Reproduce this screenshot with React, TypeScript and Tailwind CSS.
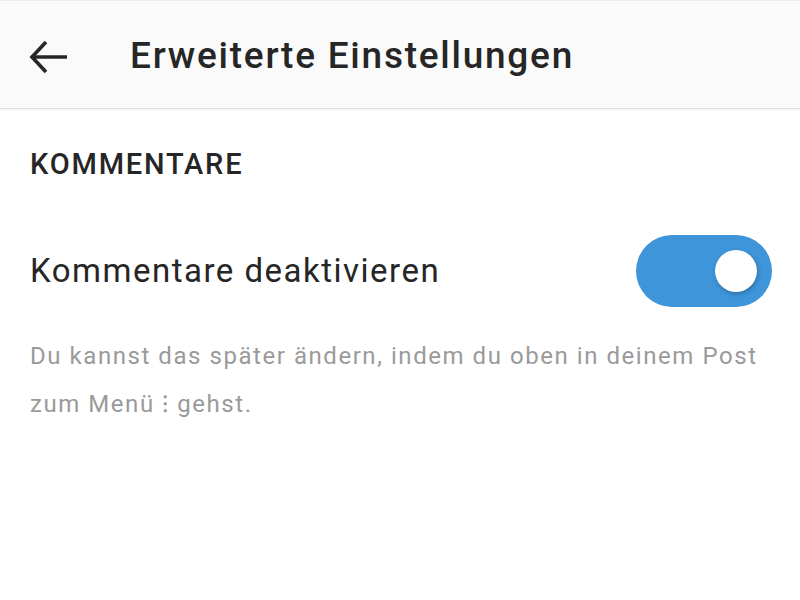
import { useState } from "react";

export default function App() {
  const [disabled, setDisabled] = useState(true);

  return (
    <main className="w-[800px] h-[600px] bg-white text-[#262626] font-['Roboto',sans-serif]">
      {/* Toolbar */}
      <header className="h-[109px] bg-[#fafafa] border-t border-[#ececec] border-b border-b-[#dedede] shadow-[0_1px_2px_rgba(0,0,0,0.06)] flex items-center">
        <button className="ml-[28px] mt-[4px] w-[40px] h-[40px] flex items-center justify-center text-[#262626]">
          <svg width="40" height="40" viewBox="0 0 40 40" fill="none" stroke="currentColor" strokeWidth="3.6" strokeLinecap="butt" strokeLinejoin="miter">
            <path d="M3.5 20H39" />
            <path d="M18 5L4 20L18 35" />
          </svg>
        </button>
        <h1 className="ml-[62px] pt-[3px] text-[37px] leading-[106px] font-medium tracking-[1.75px]">Erweiterte Einstellungen</h1>
      </header>

      <section className="pl-[30px] pr-[28px] pt-[37px]">
        <h2 className="text-[29px] leading-[36px] font-medium tracking-[1.8px]">KOMMENTARE</h2>

        <div className="mt-[53px] flex items-center justify-between h-[72px]">
          <span className="text-[33px] leading-[72px] tracking-[1.5px]">Kommentare deaktivieren</span>
          <button
            onClick={() => setDisabled(!disabled)}
            className={`relative w-[136px] h-[72px] rounded-full ${disabled ? "bg-[#3e95d9]" : "bg-[#c4c4c4]"}`}
          >
            <span
              className={`absolute top-[15px] w-[42px] h-[42px] rounded-full bg-white shadow-[1px_2px_4px_rgba(0,0,0,0.25)] ${disabled ? "left-[79px]" : "left-[15px]"}`}
            />
          </button>
        </div>

        <p className="mt-[25px] text-[24px] leading-[48px] tracking-[1.55px] text-[#9a9a9a] whitespace-nowrap">
          Du kannst das später ändern, indem du oben in deinem Post
          <br />
          zum Menü ⁝ gehst.
        </p>
      </section>
    </main>
  );
}
